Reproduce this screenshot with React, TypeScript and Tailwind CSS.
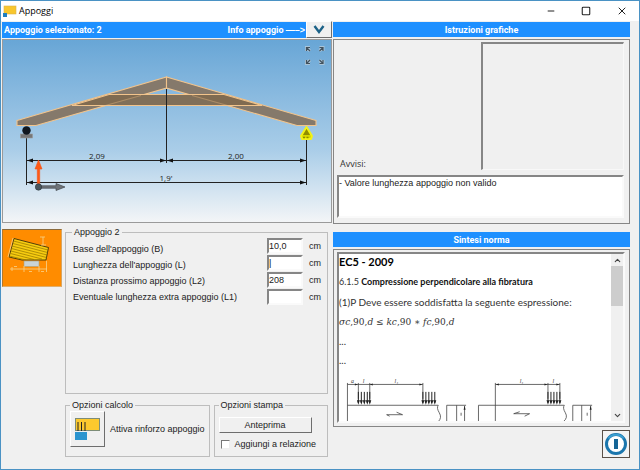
import { useState, type ReactNode } from "react";
import { ChevronDown, ChevronUp, Minus, Square, X } from "lucide-react";

const sunken =
  "border-2 border-t-[#868686] border-l-[#868686] border-r-[#fafafa] border-b-[#fafafa]";
const raised =
  "border border-t-white border-l-white border-r-[#6e6e6e] border-b-[#6e6e6e] bg-[#f0f0f0]";

function HeaderBar({ children }: { children: ReactNode }) {
  return (
    <h2 className="h-[15px] bg-[#1e90ff] text-center font-[Roboto,sans-serif] text-[9px] leading-4 font-bold text-white">
      {children}
    </h2>
  );
}

function TitleBar() {
  return (
    <header className="flex h-5 items-center bg-white pl-[2px]">
      <svg width="14" height="12" viewBox="0 0 14 12" aria-hidden="true">
        <rect x="1" y="1" width="12" height="8" fill="#f8c62c" stroke="#d9b24a" strokeWidth="0.6" />
        <rect x="0" y="8" width="4" height="4" fill="#1f7fc0" />
      </svg>
      <h1 className="ml-[2px] flex-1 font-['Open_Sans',sans-serif] text-[9px] leading-4 text-black">Appoggi</h1>
      <div className="flex items-center gap-[25px] pr-[11px] text-[#222]">
        <button type="button" aria-label="Riduci a icona"><Minus size={10} strokeWidth={2.4} /></button>
        <button type="button" aria-label="Ingrandisci"><Square size={10} strokeWidth={2.6} /></button>
        <button type="button" aria-label="Chiudi"><X size={12} strokeWidth={2} /></button>
      </div>
    </header>
  );
}

function TrussView() {
  return (
    <div className="h-[184px] border border-[#9a9a9a] bg-linear-to-b from-[#68a6d6] via-[#a9cde8] via-60% to-[#f3f5f7]">
      <svg viewBox="3 40 328 182" className="h-full w-full" role="img" aria-label="Capriata con appoggi">
        <g stroke="#f2c48c" strokeWidth="1.1" fill="#85796b">
          <path d="M17 120.5 166.5 77V88L36 125.5H17Z" />
          <path d="M316 120.5 166.5 77V88L297 125.5H316Z" />
          <path d="M109 94.5H224L262 105.5H72Z" fill="#806a50" fillOpacity="0.94" />
          <path d="M100 107 141 95.5M233 107 192 95.5" fill="none" strokeOpacity="0.35" />
        </g>
        <g stroke="#222" strokeWidth="1" fill="none">
          <path d="M166.5 89V163M26.5 138V185M306.5 138V185" />
          <path d="M27 160.5H306M27 182.5H306" />
        </g>
        <g fill="#111">
          <path d="M27 160.5 33 158.5V162.5ZM166 160.5 160 158.5V162.5ZM167 160.5 173 158.5V162.5ZM306 160.5 300 158.5V162.5Z" />
          <path d="M27 182.5 33 180.5V184.5ZM306 182.5 300 180.5V184.5Z" />
        </g>
        <g fill="#222" textAnchor="middle" className="font-['Open_Sans',sans-serif] text-[8px]">
          <text x="97" y="159">2,09</text>
          <text x="236" y="159">2,00</text>
          <text x="166" y="181">1,9'</text>
        </g>
        <rect x="20.5" y="134" width="12" height="4" fill="#777" stroke="#999" strokeWidth="0.6" />
        <circle cx="26.5" cy="130.5" r="4.2" fill="#111820" />
        <path d="M306.5 127 312 136 311 139H302L301 136Z" fill="#d8d800" stroke="#f2f21a" strokeWidth="2" strokeLinejoin="round" />
        <path d="M306.5 129 310 135H303Z" fill="#908d00" />
        <path d="M303 137.5H310" stroke="#908d00" strokeWidth="1.5" strokeDasharray="2 1.5" />
        <path d="M37.3 187V169H35L38.5 160 42 169H39.7V187Z" fill="#ff5a14" stroke="#f4511a" strokeWidth="0.6" />
        <path d="M38 185.8H56V183.5L65 187 56 190.5V188.2H38Z" fill="#6f7479" stroke="#44484d" strokeWidth="0.7" />
        <circle cx="38.5" cy="187" r="3.2" fill="#4a555c" stroke="#2d363c" strokeWidth="0.6" />
        <g stroke="#a9c4d8" strokeWidth="3" fill="none">
          <path d="M306.5 51V47.5H310M307 48 310 51M319.5 47.5H323V51M322.5 48 319.5 51M306.5 60V63.5H310M307 63 310 60M323 60V63.5H319.5M322.5 63 319.5 60" />
        </g>
        <g stroke="#42525e" strokeWidth="1.2" fill="none">
          <path d="M306.5 51V47.5H310M307 48 310 51M319.5 47.5H323V51M322.5 48 319.5 51M306.5 60V63.5H310M307 63 310 60M323 60V63.5H319.5M322.5 63 319.5 60" />
        </g>
      </svg>
    </div>
  );
}

function SupportTile() {
  return (
    <button
      type="button"
      aria-label="Appoggio 2"
      className="mt-[3px] h-[58px] w-[60px] shrink-0 border border-t-[#8a6a3c] border-l-[#b07a30] border-r-[#d9a560] border-b-[#e0ae6c] bg-[#ff8c00]"
    >
      <svg viewBox="3 230 58 56" className="h-full w-full" aria-hidden="true">
        <path d="M14 238.5 48.5 247.5 46 260H22L9 257Z" fill="#f7cc10" stroke="#3d3208" strokeWidth="0.9" />
        <g stroke="#927400" strokeWidth="0.7">
          <path d="M13.5 241 48 250M13 243.5 47.5 252.5M12 246 47 255M11.5 248.5 46.5 257.5M11 251 42 259M10.5 253.5 34 259.5M9.5 256 26 260" />
        </g>
        <path d="M13 238 8 257" stroke="#fbd68c" strokeWidth="0.8" />
        <rect x="24" y="261" width="15" height="5.5" fill="#c9d3d6" stroke="#a8a07c" strokeWidth="0.6" />
        <g stroke="#f6d48e" strokeWidth="0.8" fill="none">
          <path d="M10 269H47M24 266V272M39 266V272M46.5 261V272M12 267V271M40 237H45M43 237V245M41 245H46" />
          <path d="M14 266.5H17M29 271.5H32M41 271.5H44" />
        </g>
      </svg>
    </button>
  );
}

const fields = [
  { id: "base", label: "Base dell'appoggio (B)", value: "10,0", hint: "" },
  { id: "lunghezza", label: "Lunghezza dell'appoggio (L)", value: "", hint: "|" },
  { id: "distanza", label: "Distanza prossimo appoggio (L2)", value: "208", hint: "" },
  { id: "extra", label: "Eventuale lunghezza extra appoggio (L1)", value: "", hint: "" },
];

function SupportFields() {
  const [values, setValues] = useState<Record<string, string>>(
    Object.fromEntries(fields.map((f) => [f.id, f.value])),
  );
  return (
    <fieldset className="h-[168px] border border-[#bdbdbd] px-[6px]">
      <legend className="px-[2px] leading-3">Appoggio 2</legend>
      <div className="flex justify-between">
        <div className="flex flex-col pt-[3px] pl-px">
          {fields.map((f) => (
            <label key={f.id} htmlFor={f.id} className="h-4 leading-4 whitespace-nowrap">{f.label}</label>
          ))}
        </div>
        <div className="flex flex-col gap-px">
          {fields.map((f) => (
            <div key={f.id} className="flex h-4 items-center gap-[6px]">
              <input
                id={f.id}
                value={values[f.id]}
                placeholder={f.hint}
                onChange={(e) => setValues({ ...values, [f.id]: e.target.value })}
                className={`h-4 w-9 bg-white leading-3 outline-none placeholder:text-black ${sunken}`}
              />
              <span>cm</span>
            </div>
          ))}
        </div>
      </div>
    </fieldset>
  );
}

function CalcOptions() {
  return (
    <fieldset className="h-[58px] w-[144px] shrink-0 border border-[#bdbdbd] px-1">
      <legend className="px-[2px] leading-3">Opzioni calcolo</legend>
      <div className="flex items-center gap-[5px]">
        <button id="rinforzo" type="button" className={`flex h-9 w-[35px] items-center justify-center ${raised}`}>
          <svg width="25" height="22" viewBox="0 0 25 22" aria-hidden="true">
            <rect x="0.5" y="0.5" width="24" height="12" fill="#fcc92e" stroke="#7d8d78" />
            <rect x="0" y="14" width="12" height="8" fill="#2b94cf" />
            <path d="M3 4V13M6.5 4V13M10 4V13" stroke="#222" />
          </svg>
        </button>
        <label htmlFor="rinforzo" className="whitespace-nowrap">Attiva rinforzo appoggio</label>
      </div>
    </fieldset>
  );
}

function PrintOptions() {
  return (
    <fieldset className="h-[58px] flex-1 border border-[#bdbdbd] px-1">
      <legend className="px-[2px] leading-3">Opzioni stampa</legend>
      <button type="button" className={`mt-[6px] block h-4 w-[93px] leading-3 ${raised}`}>Anteprima</button>
      <label className="mt-[5px] flex items-center gap-[5px] pl-[2px] whitespace-nowrap">
        <input
          type="checkbox"
          className="size-[9px] appearance-none border border-t-[#777] border-r-[#eee] border-b-[#eee] border-l-[#777] bg-white checked:bg-[#1e90ff]"
        />
        Aggiungi a relazione
      </label>
    </fieldset>
  );
}

function Notices() {
  return (
    <section className="mt-[2px] flex h-[185px] flex-col border border-[#868686] pt-[2px] pr-[5px] pb-[5px] pl-[3px]">
      <div className="flex flex-1 items-end">
        <label htmlFor="avvisi" className="w-1/2 pl-[3px] font-['Open_Sans',sans-serif] leading-3 text-[#333]">Avvisi:</label>
        <div className="h-full flex-1 border-t-2 border-r border-b border-l-2 border-t-[#868686] border-r-[#f8f8f8] border-b-[#f8f8f8] border-l-[#868686]" />
      </div>
      <textarea
        id="avvisi"
        readOnly
        value="- Valore lunghezza appoggio non valido"
        className={`mt-[5px] block h-[43px] w-full resize-none bg-white leading-3 outline-none ${sunken}`}
      />
    </section>
  );
}

function BeamDiagram() {
  return (
    <svg viewBox="338 376 274 47" className="mt-[7px] w-full" role="img" aria-label="Schemi di carico">
      <g stroke="#444" strokeWidth="0.8" fill="none">
        <path d="M346.5 384V423M346.5 406.5H438Q436 409 439 414T438 423M346.5 385.5H422.5M357.5 384V400M369 384V400M422.5 384V400" />
        <path d="M478.5 423V406.5H565Q563 409 566 414T564 423M495.5 384V423M495.5 385.5H560.5M548.5 384V400M560.5 384V400" />
        <path d="M446.5 423V406.5H466M456.5 406.5V423M464.5 407V423M460 423H466" />
        <path d="M573.5 423V406.5H593M582.5 406.5V423M591.5 407V423M587 423H593" />
        <path d="M386 416H402L396 413.5M389 417.5 386 416M514 415H530M514 415 520 413M530 415 525 417.5" />
        <path d="M461 417V414M588 417V414" />
      </g>
      <g stroke="#222" strokeWidth="1">
        <path d="M357.5 393V404M360.5 393V404M363.5 393V404M366.5 393V404M369 393V404M422.5 393V404M425.5 393V404M428.5 393V404M431.5 393V404M434.5 393V404M548.5 393V404M551.5 393V404M554.5 393V404M557.5 393V404M560.5 393V404" />
      </g>
      <g fill="#222">
        <path d="M356 401.5H359L357.5 406ZM359 401.5H362L360.5 406ZM362 401.5H365L363.5 406ZM365 401.5H368L366.5 406ZM367.5 401.5H370.5L369 406ZM421 401.5H424L422.5 406ZM424 401.5H427L425.5 406ZM427 401.5H430L428.5 406ZM430 401.5H433L431.5 406ZM433 401.5H436L434.5 406ZM547 401.5H550L548.5 406ZM550 401.5H553L551.5 406ZM553 401.5H556L554.5 406ZM556 401.5H559L557.5 406ZM559 401.5H562L560.5 406Z" />
        <path d="M369 385.5 372 384.5V386.5ZM422 385.5 419 384.5V386.5ZM496 385.5 499 384.5V386.5ZM548 385.5 545 384.5V386.5ZM357 385.5 354 384.5V386.5ZM560 385.5 557 384.5V386.5ZM464.5 407 463.5 411H465.5ZM591.5 407 590.5 411H592.5Z" />
      </g>
      <g fill="#333" className="font-['Liberation_Serif',serif] text-[6px] italic">
        <text x="350" y="384">a</text>
        <text x="362" y="384">l</text>
        <text x="394" y="384">l₁</text>
        <text x="520" y="384">l₁</text>
        <text x="553" y="384">l</text>
      </g>
    </svg>
  );
}

function NormSummary() {
  return (
    <section className="mt-[2px] border border-[#868686] pt-[2px] pr-[4px] pb-[3px] pl-[3px]">
      <div className={`flex h-[171px] bg-white ${sunken}`}>
        <article className="min-w-0 flex-1 overflow-hidden font-[Lato,sans-serif] text-[10px] text-[#333]">
          <h3 className="text-[11px] leading-4 font-bold text-black">EC5 - 2009</h3>
          <p className="mt-1 text-[9px] leading-4">6.1.5 <b className="text-[#111]">Compressione perpendicolare alla fibratura</b></p>
          <p className="mt-1 leading-4">(1)P Deve essere soddisfatta la seguente espressione:</p>
          <p className="mt-1 font-['DejaVu_Serif',serif] text-[9px] leading-4">
            <i>σc</i>,90,<i>d</i> ≤ <i>kc</i>,90 ∗ <i>fc</i>,90,<i>d</i>
          </p>
          <p className="mt-[3px] leading-4">...</p>
          <p className="mt-[3px] leading-4">...</p>
          <BeamDiagram />
        </article>
        <div className="flex w-3 shrink-0 flex-col items-center bg-[#f0f0f0] text-[#444]">
          <button type="button" aria-label="Scorri su" className="flex h-3 items-center"><ChevronUp size={9} strokeWidth={3} /></button>
          <div className="h-10 w-full bg-[#cdcdcd]" />
          <button type="button" aria-label="Scorri giù" className="mt-auto flex h-3 items-center"><ChevronDown size={9} strokeWidth={3} /></button>
        </div>
      </div>
    </section>
  );
}

export default function App() {
  return (
    <div className="flex min-h-screen flex-col border border-[#4a92c4] bg-[#f0f0f0] font-['Liberation_Sans',Arial,sans-serif] text-[9px] leading-3 text-[#222]">
      <TitleBar />
      <main className="grid flex-1 grid-cols-[minmax(0,330fr)_minmax(0,297fr)] gap-x-px pr-[9px] pl-px">
        <div>
          <div className="flex h-[18px] items-stretch pb-px">
            <h2 className="mt-px flex flex-1 justify-between bg-[#1e90ff] pr-px pl-[2px] font-[Roboto,sans-serif] text-[9px] leading-4 font-bold whitespace-nowrap text-white">
              <span>Appoggio selezionato: 2</span>
              <span>Info appoggio <span className="font-['Liberation_Sans',sans-serif]">—–&gt;</span></span>
            </h2>
            <button type="button" aria-label="Info appoggio" className={`flex w-[26px] items-center justify-center ${raised}`}>
              <svg width="12" height="9" viewBox="0 0 12 9" aria-hidden="true">
                <path d="M1.5 1 6 7 10.5 1" fill="none" stroke="#1c6288" strokeWidth="2.4" />
              </svg>
            </button>
          </div>
          <TrussView />
          <div className="mt-[3px] flex gap-[3px]">
            <SupportTile />
            <div className="min-w-0 flex-1 pr-1">
              <SupportFields />
              <div className="mt-[5px] flex gap-1">
                <CalcOptions />
                <PrintOptions />
              </div>
            </div>
          </div>
        </div>
        <div className="flex flex-col pt-px">
          <HeaderBar>Istruzioni grafiche</HeaderBar>
          <Notices />
          <div className="mt-2">
            <HeaderBar>Sintesi norma</HeaderBar>
          </div>
          <NormSummary />
          <button
            type="button"
            aria-label="Esci"
            className="mt-[3px] flex size-7 items-center justify-center self-end border border-[#5a5048] bg-[#f4f4f4]"
          >
            <svg width="24" height="24" viewBox="0 0 24 24" aria-hidden="true">
              <circle cx="12" cy="12" r="9.5" fill="#fff" stroke="#1b76ad" strokeWidth="3" />
              <path d="M4.5 6.5A9.5 9.5 0 0 1 19.5 6.5" fill="none" stroke="#3d9fd0" strokeWidth="2" />
              <rect x="10" y="7" width="4" height="10" fill="#156596" />
            </svg>
          </button>
        </div>
      </main>
    </div>
  );
}
